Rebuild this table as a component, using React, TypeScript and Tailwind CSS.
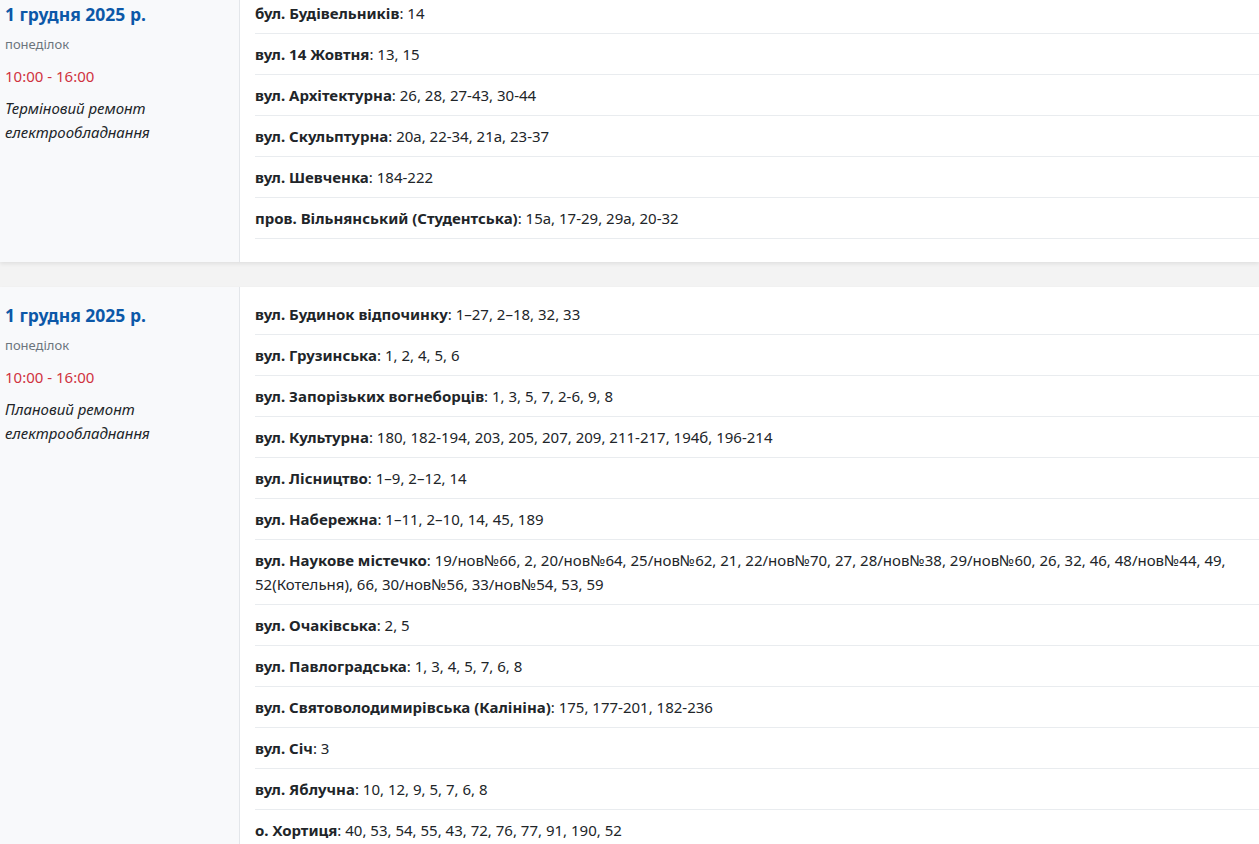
type Street = { name: string; houses: React.ReactNode };

type Outage = {
  date: string;
  weekday: string;
  time: string;
  reason: string[];
  streets: Street[];
};

const outages: Outage[] = [
  {
    date: "1 грудня 2025 р.",
    weekday: "понеділок",
    time: "10:00 - 16:00",
    reason: ["Терміновий ремонт", "електрообладнання"],
    streets: [
      { name: "бул. Будівельників", houses: "14" },
      { name: "вул. 14 Жовтня", houses: "13, 15" },
      { name: "вул. Архітектурна", houses: "26, 28, 27-43, 30-44" },
      { name: "вул. Скульптурна", houses: "20а, 22-34, 21а, 23-37" },
      { name: "вул. Шевченка", houses: "184-222" },
      { name: "пров. Вільнянський (Студентська)", houses: "15а, 17-29, 29а, 20-32" },
    ],
  },
  {
    date: "1 грудня 2025 р.",
    weekday: "понеділок",
    time: "10:00 - 16:00",
    reason: ["Плановий ремонт", "електрообладнання"],
    streets: [
      { name: "вул. Будинок відпочинку", houses: "1–27, 2–18, 32, 33" },
      { name: "вул. Грузинська", houses: "1, 2, 4, 5, 6" },
      { name: "вул. Запорізьких вогнеборців", houses: "1, 3, 5, 7, 2-6, 9, 8" },
      { name: "вул. Культурна", houses: "180, 182-194, 203, 205, 207, 209, 211-217, 194б, 196-214" },
      { name: "вул. Лісництво", houses: "1–9, 2–12, 14" },
      { name: "вул. Набережна", houses: "1–11, 2–10, 14, 45, 189" },
      {
        name: "вул. Наукове містечко",
        houses: (
          <>
            19/нов№66, 2, 20/нов№64, 25/нов№62, 21, 22/нов№70, 27, 28/нов№38, 29/нов№60, 26, 32, 46, 48/нов№44, 49,
            <br />
            52(Котельня), 66, 30/нов№56, 33/нов№54, 53, 59
          </>
        ),
      },
      { name: "вул. Очаківська", houses: "2, 5" },
      { name: "вул. Павлоградська", houses: "1, 3, 4, 5, 7, 6, 8" },
      { name: "вул. Святоволодимирівська (Калініна)", houses: "175, 177-201, 182-236" },
      { name: "вул. Січ", houses: "3" },
      { name: "вул. Яблучна", houses: "10, 12, 9, 5, 7, 6, 8" },
      { name: "о. Хортиця", houses: "40, 53, 54, 55, 43, 72, 76, 77, 91, 190, 52" },
    ],
  },
];

function OutageCard({ outage }: { outage: Outage }) {
  return (
    <div className="flex bg-white shadow-[0_2px_4px_rgba(0,0,0,0.08)]">
      <div className="w-[240px] shrink-0 border-r border-[#e3e6ea] bg-[#f8f9fb] px-[5px] pt-[15px]">
        <div className="text-[17.5px] font-bold leading-[27px] text-[#0c58a8]">{outage.date}</div>
        <div className="mt-[6px] text-[13px] leading-5 text-[#6c757d]">{outage.weekday}</div>
        <div className="mt-[10px] text-[15px] leading-6 text-[#d0333f]">{outage.time}</div>
        <div className="mt-[8px] text-[15px] italic leading-6 text-[#212529]">
          {outage.reason.map((line) => (
            <div key={line}>{line}</div>
          ))}
        </div>
      </div>

      <div className="min-w-0 flex-1 pb-[23px] pl-[15px] pt-[7px]">
        {outage.streets.map((street) => (
          <div
            key={street.name}
            className="whitespace-nowrap border-b border-[#e9ecef] py-2 text-[15px] leading-6 text-[#212529]"
          >
            <span className="font-bold">{street.name}</span>: {street.houses}
          </div>
        ))}
      </div>
    </div>
  );
}

export default function App() {
  return (
    <div className="h-screen overflow-hidden bg-[#f3f3f3] font-['Noto_Sans',sans-serif]">
      <div className="-mt-[14px] flex flex-col gap-[25px]">
        {outages.map((outage, i) => (
          <OutageCard key={i} outage={outage} />
        ))}
      </div>
    </div>
  );
}
